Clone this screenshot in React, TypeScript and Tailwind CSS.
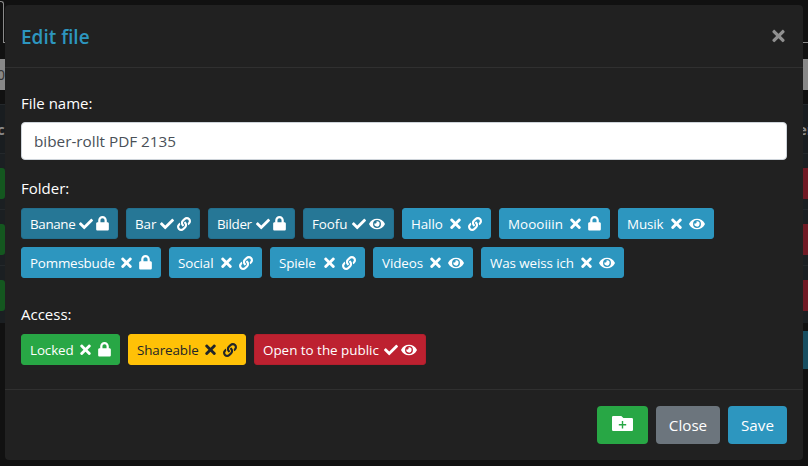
import { FaCheck, FaEye, FaLink, FaLock, FaTimes } from "react-icons/fa";
import clsx from "clsx";

type ChipProps = { label: string; width: string; icon: "lock" | "link" | "eye"; checked?: boolean; tone?: string; spacing?: string };

function Chip({ label, width, icon, checked, tone, spacing }: ChipProps) {
  return (
    <button className={clsx("flex h-[31px] items-center rounded-[3px] border px-[8px] text-[13.4px] whitespace-nowrap", width, tone ?? (checked ? "border-[#236f8e] bg-[#267796] text-white" : "border-[#2d96bf] bg-[#2d96bf] text-white"))}>
      <span className={clsx("w-0 flex-1 pt-px text-left", spacing ?? "tracking-[-0.1px]")}>{label}</span>
      <span className={clsx("mr-[3.5px] flex shrink-0 justify-center", checked ? "w-[14px]" : "w-[17.5px]")}>
        {checked ? <FaCheck className="size-[14px]" /> : <FaTimes className="h-[15.5px] w-[11px]" />}
      </span>
      {icon === "lock" && <FaLock className="h-[14.5px] w-[13px] shrink-0" />}
      {icon === "link" && <FaLink className="size-[14px] shrink-0" />}
      {icon === "eye" && <FaEye className="h-[14px] w-[16px] shrink-0" />}
    </button>
  );
}

function FolderPlus() {
  return (
    <svg viewBox="0 0 21 15" className="h-[15px] w-[21px]" aria-hidden="true">
      <path fill="#fff" d="M1.2 0H9.3L11.4 2H19.8Q21 2 21 3.2V13.8Q21 15 19.8 15H1.2Q0 15 0 13.8V1.2Q0 0 1.2 0Z" />
      <path stroke="#28a745" strokeWidth="1.4" d="M10.5 5v7.4M6.8 8.7h7.4" />
    </svg>
  );
}

function Edge({ side }: { side: "left" | "right" }) {
  const left = side === "left";
  const action = left ? "bg-[#14571f]" : "bg-[#701a24]";
  return (
    <div className="h-full w-[5px] shrink-0 overflow-hidden bg-[#111] text-[#8a8a8a]">
      <div className={clsx("flex h-[43px]", !left && "border-b border-[#8a8a8a]")}>
        {left && <div className="mt-px w-[4px] rounded-tr-[3px] border-t border-r border-[#8a8a8a]" />}
        {left && <div className="w-px border-b border-[#8a8a8a]" />}
      </div>
      <div className="mt-4 flex h-[31px] items-center bg-[#888] text-sm text-[#333]">{left && <span className="-ml-[3px]">0</span>}</div>
      <div className="mt-[14px] flex h-[49px] items-center border-t border-[#24282b] bg-[#191d20] text-[15px] font-bold">
        <span className={left ? "-ml-[3px]" : "-ml-[5px]"}>{left ? "c" : "er"}</span>
      </div>
      {[0, 1, 2].map((row) => (
        <div key={row} className={clsx("border-t border-[#24282b] bg-[#1b1f22] pt-[14px]", row === 2 ? "h-[58px]" : "h-[56px]")}>
          <div className={clsx("h-[31px]", action, left && "rounded-r-[3px]")} />
        </div>
      ))}
      {!left && <div className="mt-[8px] h-[38px] bg-[#184e61]" />}
    </div>
  );
}

export default function App() {
  return (
    <div className="flex h-[466px] w-[808px] overflow-hidden bg-[#111] font-['Open_Sans','Noto_Sans',sans-serif] text-white">
      <Edge side="left" />
      <main className="mt-[5px] h-[455px] w-[798px] shrink-0 rounded-[4px] bg-[#212121]">
        <header className="flex h-[63px] items-center justify-between border-b border-[#303030] px-4">
          <h1 className="pt-[2px] text-[19px] font-semibold text-[#2d96bf]">Edit file</h1>
          <FaTimes className="mr-[2px] h-[18px] w-[13px] text-[#909090]" />
        </header>
        <section className="h-[321px] px-4 pt-[23px]">
          <label className="block h-[31px] text-[15px] leading-6">File name:</label>
          <div className="flex h-[38px] items-center rounded-[4px] border border-[#ced4da] bg-white px-3 text-[15.3px] text-[#495057]">biber-rollt PDF 2135</div>
          <div className="mt-4 h-8 text-[15px] leading-6">Folder:</div>
          <div className="flex flex-wrap gap-2">
            <Chip label="Banane" width="w-[97px]" icon="lock" checked spacing="tracking-[-0.35px]" />
            <Chip label="Bar" width="w-[74px]" icon="link" checked />
            <Chip label="Bilder" width="w-[87px]" icon="lock" checked spacing="tracking-[-0.3px]" />
            <Chip label="Foofu" width="w-[91px]" icon="eye" checked />
            <Chip label="Hallo" width="w-[89px]" icon="link" />
            <Chip label="Moooiiin" width="w-[111px]" icon="lock" spacing="tracking-[0.05px]" />
            <Chip label="Musik" width="w-[96px]" icon="eye" />
            <Chip label="Pommesbude" width="w-[140px]" icon="lock" spacing="tracking-[-0.2px]" />
            <Chip label="Social" width="w-[93px]" icon="link" />
            <Chip label="Spiele" width="w-[95px]" icon="link" />
            <Chip label="Videos" width="w-[100px]" icon="eye" />
            <Chip label="Was weiss ich" width="w-[143px]" icon="eye" />
          </div>
          <div className="mt-6 h-8 text-[15px] leading-6">Access:</div>
          <div className="flex gap-2">
            <Chip label="Locked" width="w-[99px]" icon="lock" tone="border-[#28a745] bg-[#28a745] text-white" />
            <Chip label="Shareable" width="w-[118px]" icon="link" tone="border-[#ffc107] bg-[#ffc107] text-[#212529]" />
            <Chip label="Open to the public" width="w-[172px]" icon="eye" checked tone="border-[#b21f2d] bg-[#bd2130] text-white" spacing="tracking-normal" />
          </div>
        </section>
        <footer className="flex justify-end gap-2 border-t border-[#303030] px-4 pt-4 text-[15.2px]">
          <button className="flex h-[38px] w-[51px] items-center justify-center rounded-[4px] bg-[#28a745] pb-[3px]"><FolderPlus /></button>
          <button className="h-[38px] w-16 rounded-[4px] bg-[#6c757d]">Close</button>
          <button className="h-[38px] w-[59px] rounded-[4px] bg-[#2d96bf]">Save</button>
        </footer>
      </main>
      <Edge side="right" />
    </div>
  );
}
